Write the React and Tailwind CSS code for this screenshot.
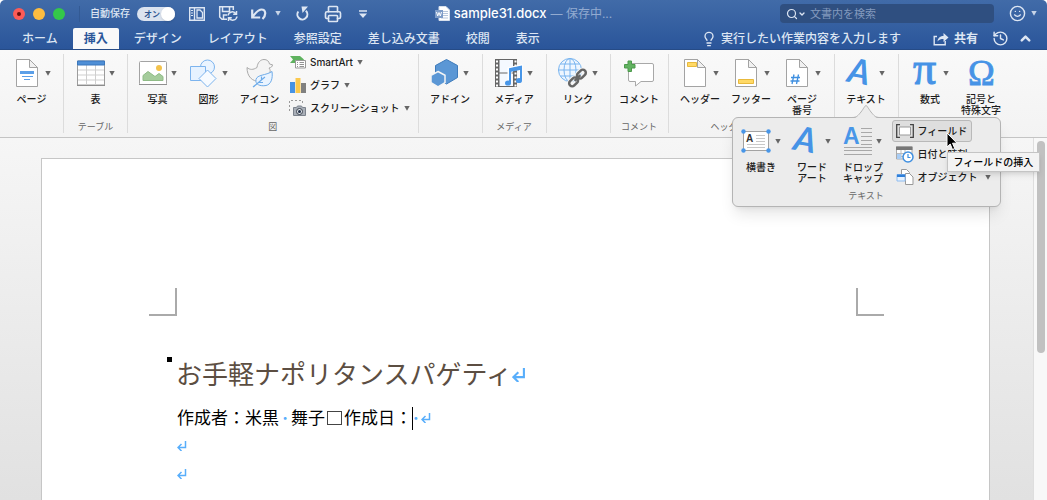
import React, { useState } from 'react';
import { Search, ChevronDown, ChevronUp, Lightbulb, Smile, Printer, History } from 'lucide-react';

const tabs = ['ホーム', '挿入', 'デザイン', 'レイアウト', '参照設定', '差し込み文書', '校閲', '表示'];

const Caret = ({ className = 'text-[#666]' }) => (
    <svg className={`h-[5px] w-[6px] shrink-0 ${className}`} viewBox="0 0 6 5" fill="currentColor" aria-hidden="true">
        <path d="M.300 0h5.400L3 4.800z" />
    </svg>
);

const Svg = ({ children, w = 28, h = 30 }) => (
    <svg width={w} height={h} viewBox={`0 0 ${w} ${h}`} fill="none" className="shrink-0 overflow-visible" aria-hidden="true">
        {children}
    </svg>
);

const Sheet = ({ children }) => (
    <Svg w={22} h={28}>
        <path d="M.5.5h13l8 8v19H.5z" fill="#fff" stroke="#a3a3a3" />
        <path d="M13.5.5v8h8z" fill="#f1f1f1" stroke="#a3a3a3" />
        {children}
    </Svg>
);

const PageIcon = () => (
    <Sheet>
        <path d="M4 12h14v3H4z" fill="#5b9fe8" />
        <path d="M6 17.5h11M8 20.5h6" stroke="#5b9fe8" />
    </Sheet>
);

const HeaderIcon = () => (
    <Sheet>
        <path d="M3.5 3.5h9v4h-9z" fill="#ffd966" stroke="#e8b93c" />
    </Sheet>
);

const FooterIcon = () => (
    <Sheet>
        <path d="M3.5 20.5h15v4h-15z" fill="#ffd966" stroke="#e8b93c" />
    </Sheet>
);

const PageNumberIcon = () => (
    <Sheet>
        <path d="M8 15.5 6 25M12.500 15.500 10.500 25M5 18.500h9M4.500 22h9" stroke="#3f8fe0" strokeWidth="1.300" />
    </Sheet>
);

const TableIcon = () => (
    <Svg w={28} h={26}>
        <path d="M.5 1h27v24H.5z" fill="#fff" stroke="#9c9c9c" />
        <path d="M1 10h26M1 15h26M1 20h26M9.500 5v20M18.500 5v20" stroke="#cfcfcf" />
        <path d="M.5 1h27v4H.5z" fill="#4f8fd6" stroke="#3a77bd" />
        <path d="M0 25.500h28" stroke="#8d8d8d" />
    </Svg>
);

const PhotoIcon = () => (
    <Svg w={28} h={26}>
        <rect x=".5" y="1.500" width="27" height="23" rx="1" fill="#fff" stroke="#a3a3a3" />
        <path d="M0 24.500h28" stroke="#8f8f8f" />
        <circle cx="20" cy="8" r="3" fill="#f3c24c" />
        <path d="M4 20.500v-5l5-4 7 5 4-3 4 3v4z" fill="#a5cc9c" stroke="#8fbb86" />
    </Svg>
);

const ShapesIcon = () => (
    <Svg w={27} h={28}>
        <circle cx="17.500" cy="8" r="7" fill="#eaf4ff" stroke="#7db4ee" />
        <path d="M.5 7.500h15v14H.5z" fill="#e6f2ff" stroke="#7db4ee" />
        <path d="m17.500 11 8.500 8.500-8.500 8.500L9 19.500z" fill="#f7fbff" stroke="#7db4ee" />
    </Svg>
);

const DuckIcon = () => (
    <Svg w={28} h={28}>
        <path d="M11 8.500C11.500 3.500 14.500.5 18 .5c3 0 5 1.700 5.500 4.500l3 .8c0 1.700-1.500 3-3.500 3.200 1.500 2 1.500 3 .5 5.500L14 22.500C6 22.500 1 17.500 1 8.500c3 2.500 6 2.500 10 0z" fill="#f4f4f4" stroke="#aaa" />
        <path d="M26 12.500c1 7-1 13-6 14-6 1-11-1-10-6 1-5 10-4 16-8z" fill="#eaf4ff" stroke="#6dabe9" />
        <path d="M7 28c4-3 7-6 12-10M13 23.500h4M15.500 21V17.500" stroke="#6dabe9" strokeWidth="1.200" />
    </Svg>
);

const AddinIcon = () => (
    <Svg w={28} h={28}>
        <path d="m15.500.5 11 6v12l-11 6.500-11-6.500v-12z" fill="#5b97d5" stroke="#3e7bbb" />
        <path d="m7 12.500 7 3.800v7.400L7 28l-7-4.300v-7.400z" fill="#5b97d5" stroke="#f5f5f5" strokeWidth="1.500" />
    </Svg>
);

const MediaIcon = () => (
    <Svg w={28} h={28}>
        <path d="M0 0h22v28H0z" fill="#666" />
        <path d="M4.500 1H18v12.500H4.500zM4.500 14.500H18V27H4.500z" fill="#f5f9ff" />
        <path d="M2 1.500v26M20.500 1.500v26" stroke="#fff" strokeWidth="2" strokeDasharray="2 2" />
        <path d="M14.500 24V10l11-2.500V21" stroke="#fff" strokeWidth="4" />
        <path d="M15 23.500V10l11-2.300V21" stroke="#4896e8" strokeWidth="2" />
        <path d="M15 9.500 26 7.200v3.500L15 13z" fill="#4896e8" />
        <ellipse cx="13" cy="24" rx="3" ry="2.600" fill="#4896e8" />
        <ellipse cx="24" cy="21.500" rx="3" ry="2.600" fill="#4896e8" />
    </Svg>
);

const LinkIcon = () => (
    <Svg w={30} h={30}>
        <circle cx="12" cy="12" r="11.500" fill="#eef6ff" stroke="#78b4ef" />
        <ellipse cx="12" cy="12" rx="6" ry="11.500" stroke="#78b4ef" />
        <path d="M12 .5v23M.5 12h23M2.500 6h19M2.500 18h19" stroke="#78b4ef" />
        <g transform="rotate(-45 19.500 20)" stroke="#f5f5f5" strokeWidth="4.500">
            <rect x="9" y="17" width="10" height="6" rx="3" />
            <rect x="20" y="17" width="10" height="6" rx="3" />
        </g>
        <g transform="rotate(-45 19.500 20)" stroke="#666" strokeWidth="2.500">
            <rect x="9" y="17" width="10" height="6" rx="3" />
            <rect x="20" y="17" width="10" height="6" rx="3" />
            <path d="M15.500 20h8" />
        </g>
    </Svg>
);

const CommentIcon = () => (
    <Svg w={30} h={28}>
        <path d="M6 4.500h22q1.500 0 1.500 1.500v15q0 1.500-1.500 1.500H17L11.500 27v-4.500H6q-1.500 0-1.500-1.500V6q0-1.500 1.500-1.500z" fill="#fff" stroke="#a8a8a8" />
        <path d="M4 2h3.500v3.500H11V9H7.500v3.500H4V9H.5V5.500H4z" fill="#62b261" stroke="#4d9a4c" />
    </Svg>
);

const TextBoxIcon = () => (
    <Svg w={30} h={24}>
        <path d="M2.500 2.500h25v19h-25z" fill="#fff" stroke="#a3a3a3" />
        <path d="M15 6.500h9M15 9.500h9M15 12.500h9M6 15.500h18M6 18.500h18" stroke="#c8c8c8" />
        <text x="5" y="13" fontSize="10" fontWeight="700" fill="#333" className="font-['Liberation_Sans',sans-serif]">A</text>
        <g fill="#4896e8">
            <circle cx="2.500" cy="2.500" r="2.200" />
            <circle cx="27.500" cy="2.500" r="2.200" />
            <circle cx="2.500" cy="21.500" r="2.200" />
            <circle cx="27.500" cy="21.500" r="2.200" />
        </g>
    </Svg>
);

const DropCapIcon = () => (
    <Svg w={28} h={30}>
        <path d="M17 2.500h11M17 6.500h11M17 10.500h11M17 14.500h11M17 18.500h11M0 21.500h28M0 24.500h28M0 28.500h28" stroke="#a8a8a8" />
        <text x="-1" y="18" fontSize="23" fontWeight="700" fill="#4896e8" className="font-['Liberation_Sans',sans-serif]">A</text>
    </Svg>
);

const LetterA = () => (
    <Svg w={28} h={30}>
        <text x="1" y="26" fontSize="34" fontWeight="700" fill="#4693e6" transform="rotate(10 14 15)" className="font-['Lato',sans-serif] italic">A</text>
    </Svg>
);

// Big button with the icon on top and the label below
const RibbonItem = ({ icon, lines, caret = true }) => (
    <button className="flex w-[51px] flex-col items-center whitespace-nowrap">
        <span className="flex h-8 items-center gap-1">
            <span className="flex min-w-7 justify-center">{icon}</span>
            {caret && <Caret />}
        </span>
        <span className="mt-[5px] text-[10px] leading-[11px] font-medium text-[#1c1c1c]">
            {lines.map((line) => (
                <span key={line} className="block">{line}</span>
            ))}
        </span>
    </button>
);

const SmallItem = ({ icon, label, caret = true }) => (
    <button className="flex h-4 items-center gap-1 text-[10px] font-medium whitespace-nowrap text-[#1c1c1c]">
        <span className="flex w-[17px] justify-center">{icon}</span>
        <span>{label}</span>
        {caret && <Caret />}
    </button>
);

const Group = ({ caption, className = 'px-[6px]', children }) => (
    <section className={`relative flex min-h-[79px] shrink-0 flex-col justify-between border-r border-[#dcdcdc] ${className}`}>
        <div className="flex items-start">{children}</div>
        {caption && <div className="text-center text-[9px] leading-3 text-[#666]">{caption}</div>}
    </section>
);

const ReturnMark = ({ className = 'h-[10px] w-[10px]' }) => (
    <svg viewBox="0 0 10 10" className={`shrink-0 text-[#58aefb] ${className}`} fill="none" stroke="currentColor" strokeWidth="1.500" aria-hidden="true">
        <path d="M8.500 0v6.500H1M4.500 3 1 6.500 4.500 10" />
    </svg>
);

const TitleBar = () => {
    const [autoSave, setAutoSave] = useState(true);

    return (
        <div className="flex h-[27px] items-center text-[#dde6f3]">
            <div className="flex flex-1 items-center">
                <div className="flex gap-2 border-r border-[#335a94] py-[2px] pr-[14px] pl-[13px]">
                    <button aria-label="閉じる" className="flex h-3 w-3 items-center justify-center rounded-full bg-[#fc5b57]">
                        <span className="h-1 w-1 rounded-full bg-[#6b0d0a]"></span>
                    </button>
                    <button aria-label="しまう" className="h-3 w-3 rounded-full bg-[#fdbc40]"></button>
                    <button aria-label="拡大" className="h-3 w-3 rounded-full bg-[#34c84a]"></button>
                </div>
                <label className="relative ml-[10px] flex items-center gap-[7px] text-[10px] font-medium">
                    自動保存
                    <input type="checkbox" className="sr-only" checked={autoSave} onChange={(e) => setAutoSave(e.target.checked)} />
                    <span className="flex h-[14px] w-[38px] items-center justify-between rounded-full bg-[#dbe3ef] pl-[7px] text-[8px] font-bold text-[#2d5591]">
                        オン
                        <span className="h-[14px] w-[14px] rounded-full bg-white shadow"></span>
                    </span>
                </label>
                <div className="ml-[14px] flex items-center">
                    <button aria-label="サイドバー">
                        <Svg w={16} h={14}>
                            <path d="M.7.700h14.600v12.600H.7zM5.500 1v12" stroke="#dde6f3" strokeWidth="1.400" />
                            <path d="M2 3.500h2M2 6h2M2 8.500h2" stroke="#dde6f3" />
                            <path d="M8 3h3l2.500 2.500V11H8z" stroke="#dde6f3" strokeWidth="1.300" />
                        </Svg>
                    </button>
                    <button aria-label="保存" className="ml-[14px]">
                        <Svg w={19} h={15}>
                            <path d="M8 13.300H3L.7 11V.700h13.600V4M3.500 1v4.500h7V1M4.500 13V9H8" stroke="#dde6f3" strokeWidth="1.500" />
                            <path d="M9 9.500a4.300 4.300 0 0 1 8-1.500M17.500 5v3.300h-3.300M18 10.500a4.300 4.300 0 0 1-8 1.500M9.500 15v-3.200h3.300" stroke="#dde6f3" strokeWidth="1.500" />
                        </Svg>
                    </button>
                    <button aria-label="元に戻す" className="ml-[13px] flex items-center gap-2">
                        <Svg w={16} h={13}>
                            <path d="M1.200 2.500v8h8M1.500 10C5 5 7.500 2.500 10.500 2.500c4.500 0 5 5.500 1 9.500" stroke="#dde6f3" strokeWidth="2.200" />
                        </Svg>
                        <Caret className="text-[#c7d4e8]" />
                    </button>
                    <button aria-label="繰り返し" className="ml-[15px]">
                        <Svg w={13} h={15}>
                            <path d="M2.300 5.500A5 5 0 1 0 9.800 4.800" stroke="#dde6f3" strokeWidth="2" />
                            <path d="M5.500.5H12L6.500 7z" fill="#dde6f3" />
                        </Svg>
                    </button>
                    <button aria-label="印刷" className="ml-[15px]">
                        <Printer className="h-[18px] w-[18px]" strokeWidth={2.2} />
                    </button>
                    <button aria-label="カスタマイズ" className="ml-[17px]">
                        <Svg w={8} h={8}>
                            <path d="M0 1h8" stroke="#dde6f3" strokeWidth="1.500" />
                            <path d="M0 3.500h8L4 8z" fill="#dde6f3" />
                        </Svg>
                    </button>
                </div>
            </div>
            <h1 className="flex items-center gap-1 text-[12px] font-medium text-white">
                <Svg w={15} h={15}>
                    <path d="M4 .5h7l3.500 3.500v10.500H4z" fill="#fff" stroke="#d6dfec" />
                    <path d="M8 5.500h5M8 7.500h5M8 9.500h5M6 12h7" stroke="#b7c6dc" />
                    <path d="M0 4h8v8H0z" fill="#7e9cc8" />
                    <path d="m1.500 6 1.200 4L4 6.500 5.300 10 6.500 6" stroke="#fff" />
                </Svg>
                <span className="text-[13px] font-medium">sample31.docx</span>
                <span className="font-normal text-[#93abd0]">— 保存中...</span>
            </h1>
            <div className="flex flex-1 items-center justify-end">
                <label className="relative flex h-[19px] w-[214px] items-center rounded bg-[#2f4f80] pl-[6px]">
                    <Search className="h-3 w-3 shrink-0" strokeWidth={2.4} />
                    <ChevronDown className="h-2 w-2 shrink-0" strokeWidth={4} />
                    <input type="search" aria-label="文書内を検索" placeholder="文書内を検索" className="ml-1 h-[19px] w-full min-w-0 bg-transparent text-[11px] outline-none placeholder:text-[#8299bd]" />
                </label>
                <button aria-label="フィードバック" className="mr-[10px] ml-[15px] flex items-center gap-[5px]">
                    <Smile className="h-[17px] w-[17px]" strokeWidth={2} />
                    <Caret className="text-[#c7d4e8]" />
                </button>
            </div>
        </div>
    );
};

const TabBar = () => {
    const [active, setActive] = useState('挿入');

    return (
        <div className="flex h-[22px] items-stretch pt-px text-[12px] font-medium text-[#dde6f3]">
            <nav className="flex gap-1 pl-[11px]">
                {tabs.map((tab) => (
                    <button
                        key={tab}
                        onClick={() => setActive(tab)}
                        className={`rounded-t-xs px-[11px] leading-5 whitespace-nowrap ${tab === active ? 'bg-[#f9f9f9] font-bold text-[#2b579a]' : ''}`}
                    >
                        {tab}
                    </button>
                ))}
            </nav>
            <div className="flex flex-1 items-center justify-end pr-[14px]">
                <label className="flex items-center gap-1">
                    <Lightbulb className="h-4 w-4" strokeWidth={2} />
                    <input type="text" aria-label="操作アシスト" placeholder="実行したい作業内容を入力します" className="h-5 w-[212px] bg-transparent outline-none placeholder:text-[#dde6f3]" />
                </label>
                <button className="flex items-center gap-[5px] font-bold">
                    <Svg w={16} h={14}>
                        <path d="M4 4.500H1.200v8.300h11V9" stroke="#dde6f3" strokeWidth="1.400" />
                        <path d="M4.500 9.500c.5-4 3-5.500 6-5.500V1l5 4.500-5 4.500V7c-2.500 0-4.500.5-6 2.500z" fill="#dde6f3" />
                    </Svg>
                    共有
                </button>
                <button aria-label="履歴" className="ml-[14px]"><History className="h-[17px] w-[17px]" strokeWidth={2} /></button>
                <button aria-label="リボンを折りたたむ" className="ml-[9px]"><ChevronUp className="h-[15px] w-[15px]" strokeWidth={4} /></button>
            </div>
        </div>
    );
};

const TextPopover = () => (
    <div className="absolute top-[63px] left-[-103px] z-10 w-[269px] rounded-md border border-[#b4b4b4] bg-[#ececec] pb-1 shadow-lg">
        <svg className="absolute -top-[13px] left-[119px]" width="28" height="14" viewBox="0 0 28 14" aria-hidden="true">
            <path d="M0 14v-1c5 0 6-2 9-6 3-4 4-6.500 5-6.500s2 2.500 5 6.500c3 4 4 6 9 6v1z" fill="#ececec" />
            <path d="M0 12.500c5 0 6-2 9-5.500 3-4 4-6.500 5-6.500s2 2.500 5 6.500c3 3.500 4 5.500 9 5.500" fill="none" stroke="#b4b4b4" />
        </svg>
        <div className="flex pl-[3px]">
            <div className="flex items-start pt-[7px]">
                <RibbonItem icon={<TextBoxIcon />} lines={['横書き']} />
                <RibbonItem icon={<LetterA />} lines={['ワード', 'アート']} />
                <RibbonItem icon={<DropCapIcon />} lines={['ドロップ', 'キャップ']} />
            </div>
            <div className="ml-[3px] flex flex-col items-start gap-[7px] pt-[2px]">
                <div className="-mb-[3px] rounded-[3px] border border-[#b9b9b9] bg-[#dedede] px-1 py-[2px]">
                    <SmallItem
                        caret={false}
                        label="フィールド"
                        icon={
                            <Svg w={18} h={14}>
                                <path d="M4 .7H.7v12.600H4M14 .7h3.300v12.600H14" stroke="#444" strokeWidth="1.300" />
                                <path d="M3.500 3h11v8h-11z" fill="#fff" stroke="#999" />
                            </Svg>
                        }
                    />
                </div>
                <div className="pl-[5px]">
                    <SmallItem
                        caret={false}
                        label="日付と時刻"
                        icon={
                            <Svg w={18} h={17}>
                                <path d="M.5 1h15.500v12H.5z" fill="#fff" stroke="#aaa" />
                                <path d="M0 .5h16.500V4H0z" fill="#777" />
                                <path d="M1 7.500h15M1 10.500h15M5 4v9M9 4v9" stroke="#bbb" />
                                <path d="M1 8h4v5H1z" fill="#a9cdf5" />
                                <circle cx="12" cy="11" r="5" fill="#fff" stroke="#3f8fe0" strokeWidth="1.500" />
                                <path d="M12 8v3.500h2.500" stroke="#3f8fe0" strokeWidth="1.200" />
                            </Svg>
                        }
                    />
                </div>
                <div className="pl-[5px]">
                    <SmallItem
                        label={<span className="mr-[3px]">オブジェクト</span>}
                        icon={
                            <Svg w={18} h={16}>
                                <path d="M5.500.5h5l3 3v8h-8z" fill="#fff" stroke="#999" />
                                <path d="M9.500 4.500h4l3.500 3.500v7.500H9.500z" fill="#fff" stroke="#999" />
                                <path d="M1 5.500h8v6.500H1z" fill="#e6f2ff" stroke="#8ebcf0" />
                                <path d="M1 5.500h8v2.500H1z" fill="#2f7fd8" />
                            </Svg>
                        }
                    />
                </div>
            </div>
        </div>
        <div className="mt-[5px] text-center text-[9px] leading-3 text-[#666]">テキスト</div>
        <div role="tooltip" className="absolute top-[34px] left-[214px] border border-[#c4c4c4] bg-[#f3f3f3] px-[6px] text-[10px] leading-[18px] font-medium whitespace-nowrap text-black shadow-md">
            フィールドの挿入
        </div>
        <svg className="absolute top-[14px] left-[213px]" width="12" height="19" viewBox="0 0 12 19" aria-hidden="true">
            <path d="M1 1v14l3.200-3 2.300 5.500 2.300-1-2.300-5.300H11z" fill="#000" stroke="#fff" />
        </svg>
    </div>
);

const Ribbon = () => (
    <div className="flex border-b border-[#c4c4c4] bg-gradient-to-b from-[#f9f9f9] to-[#f3f3f3] pt-1 pb-1">
        <Group>
            <div className="pt-[3px]"><RibbonItem icon={<PageIcon />} lines={['ページ']} /></div>
        </Group>
        <Group caption="テーブル">
            <div className="pt-[3px]"><RibbonItem icon={<TableIcon />} lines={['表']} /></div>
        </Group>
        <Group caption="図" className="px-1">
            <div className="flex pt-[3px]">
                <RibbonItem icon={<PhotoIcon />} lines={['写真']} />
                <RibbonItem icon={<ShapesIcon />} lines={['図形']} />
                <RibbonItem icon={<DuckIcon />} lines={['アイコン']} caret={false} />
            </div>
            <div className="flex flex-col items-start gap-[7px] pr-1 pl-1">
                <SmallItem
                    label="SmartArt"
                    icon={
                        <Svg w={16} h={14}>
                            <path d="M0 1h10l4 3.500-3 3.500H0l3-3.500z" fill="#5fb25f" />
                            <path d="M5.500 5.500h10v7.500h-10z" fill="#fff" stroke="#999" />
                            <path d="M7 7.500h1M9.500 7.500H14M7 9.500h1M9.500 9.500H14M7 11.500h1M9.500 11.500H14" stroke="#777" strokeWidth=".8" />
                        </Svg>
                    }
                />
                <SmallItem
                    label="グラフ"
                    icon={
                        <Svg w={16} h={15}>
                            <path d="M0 4h5v11H0z" fill="#4693e6" />
                            <path d="M5.500 0h5v15h-5z" fill="#fbc94e" />
                            <path d="M11 5h5v10h-5z" fill="#808080" />
                        </Svg>
                    }
                />
                <SmallItem
                    label="スクリーンショット"
                    icon={
                        <Svg w={17} h={16}>
                            <path d="M.5 11V.5h13V5" stroke="#999" strokeDasharray="2 2" />
                            <path d="M4.500 7.500h3l1-1.500h4l1 1.500h3v8h-12z" fill="#a9afb8" stroke="#7b828c" />
                            <circle cx="10.500" cy="11.500" r="3" fill="#dfe4ea" stroke="#3c434e" />
                            <circle cx="10.500" cy="11.500" r="1.500" fill="#223047" />
                        </Svg>
                    }
                />
            </div>
        </Group>
        <Group>
            <div className="pt-[3px]"><RibbonItem icon={<AddinIcon />} lines={['アドイン']} /></div>
        </Group>
        <Group caption="メディア">
            <div className="pt-[3px]"><RibbonItem icon={<MediaIcon />} lines={['メディア']} /></div>
        </Group>
        <Group>
            <div className="pt-[3px]"><RibbonItem icon={<LinkIcon />} lines={['リンク']} /></div>
        </Group>
        <Group caption="コメント" className="px-[3px]">
            <div className="pt-[3px]"><RibbonItem icon={<CommentIcon />} lines={['コメント']} caret={false} /></div>
        </Group>
        <Group caption="ヘッダーとフッター">
            <div className="flex items-start pt-[3px]">
                <RibbonItem icon={<HeaderIcon />} lines={['ヘッダー']} />
                <RibbonItem icon={<FooterIcon />} lines={['フッター']} />
                <RibbonItem icon={<PageNumberIcon />} lines={['ページ', '番号']} />
            </div>
        </Group>
        <Group>
            <div className="pt-[3px]"><RibbonItem icon={<LetterA />} lines={['テキスト']} /></div>
            <TextPopover />
        </Group>
        <div className="flex items-start px-[6px] pt-[3px]">
            <RibbonItem
                icon={
                    <Svg w={28} h={30}>
                        <text x="2" y="26" fontSize="46" fill="#4693e6" stroke="#4693e6" className="font-['Liberation_Serif',serif]">π</text>
                    </Svg>
                }
                lines={['数式']}
            />
            <RibbonItem
                icon={
                    <Svg w={28} h={30}>
                        <text x="1" y="27" fontSize="36" fill="#4693e6" stroke="#4693e6" strokeWidth=".8" className="font-['Liberation_Serif',serif]">Ω</text>
                    </Svg>
                }
                lines={['記号と', '特殊文字']}
                caret={false}
            />
        </div>
    </div>
);

const Document = () => (
    <div className="flex flex-1">
        <main className="flex flex-1 bg-gradient-to-b from-[#f6f6f6] to-[#e1e1e1] pt-5 pr-[43px] pl-[41px]">
            <article className="flex-1 border border-b-0 border-[#c6c6c6] bg-white pt-[129px]">
                <div className="flex justify-between pr-[105px] pl-[107px]">
                    <div className="h-7 w-7 border-r-2 border-b-2 border-[#aaa]"></div>
                    <div className="h-7 w-7 border-b-2 border-l-2 border-[#aaa]"></div>
                </div>
                <div className="px-[125px] pt-[41px]">
                    <h2 className="flex items-start text-[26px] leading-9 text-[#5c4e42]">
                        <span className="mr-[4px] h-[5px] w-[5px] bg-black"></span>
                        <span className="font-normal">お手軽ナポリタンスパゲティ</span>
                        <ReturnMark className="mt-[11px] h-[14px] w-[14px]" />
                    </h2>
                    <div className="pl-[10px]">
                        <p className="mt-[11px] flex items-center text-[17px] leading-7 text-black">
                            作成者：米黒
                            <span className="w-3 text-center font-bold text-[#58aefb]">·</span>
                            舞子
                            <span className="mx-[2px] h-[14px] w-[15px] border border-[#444]"></span>
                            作成日：
                            <span className="h-[23px] w-px bg-black"></span>
                            <span className="w-2 font-bold text-[#58aefb]">·</span>
                            <ReturnMark />
                        </p>
                        <p className="flex h-7 items-center"><ReturnMark /></p>
                        <p className="flex h-7 items-center"><ReturnMark /></p>
                    </div>
                </div>
            </article>
        </main>
        <div className="w-[14px] border-l border-[#dedede] bg-[#f8f8f8] px-[2px] pt-[3px]">
            <div className="mx-auto h-[212px] w-2 rounded-full bg-[#c1c1c1]"></div>
        </div>
    </div>
);

const App = () => {
    return (
        <div className="flex min-h-screen flex-col overflow-hidden bg-white font-['Inter','Noto_Sans_CJK_JP',sans-serif]">
            <header className="rounded-t-[5px] border-b border-[#264b86] bg-gradient-to-b from-[#416ba8] to-[#2a559a]">
                <TitleBar />
                <TabBar />
            </header>
            <Ribbon />
            <Document />
        </div>
    );
};

export default App;
